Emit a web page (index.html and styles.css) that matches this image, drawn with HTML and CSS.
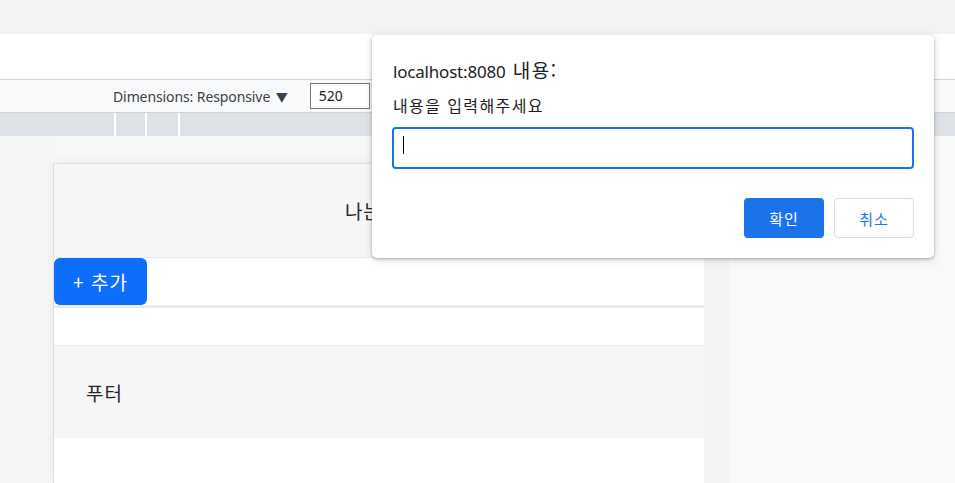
FILE: index.html
```html
<!DOCTYPE html>
<html lang="ko">
<head>
<meta charset="utf-8">
<title>Dialog</title>
<link rel="stylesheet" href="styles.css">
</head>
<body>
<div class="topbar"></div>
<div class="urlbar"></div>
<div class="toolbar">
  <span class="dims">Dimensions: Responsive <span class="caret">▼</span></span>
  <span class="size-input">520</span>
</div>
<div class="ruler">
  <span class="tick t1"></span>
  <span class="tick t2"></span>
  <span class="tick t3"></span>
</div>
<div class="canvas">
  <div class="gutter"></div>
  <div class="page">
    <header class="page-header">나는 헤더</header>
    <div class="action-row"><button class="add-btn">+ 추가</button></div>
    <div class="divider"></div>
    <div class="empty-row"></div>
    <footer class="page-footer">푸터</footer>
    <div class="page-rest"></div>
  </div>
  <div class="scrollbar"></div>
  <div class="outside"></div>
</div>

<div class="dialog">
  <div class="dlg-title">localhost:8080 <span class="ko">내용:</span></div>
  <div class="dlg-msg">내용을 입력해주세요</div>
  <div class="dlg-input"><span class="cursor"></span></div>
  <div class="dlg-buttons">
    <button class="btn-ok">확인</button>
    <button class="btn-cancel">취소</button>
  </div>
</div>
</body>
</html>
```
FILE: styles.css
```css
* { box-sizing: border-box; }
html, body { margin: 0; height: 100%; overflow: hidden; }
body {
  background: #f1f3f4;
  font-family: "Noto Sans", "Noto Sans CJK KR", sans-serif;
  color: #202124;
  position: relative;
}
.topbar { height: 34px; background: #f1f3f4; }
.urlbar { height: 46px; background: #fff; border-bottom: 1px solid #cfd2d6; }
.toolbar {
  height: 33px;
  background: #f8f9fa;
  border-bottom: 1px solid #cfd2d6;
  display: flex;
  align-items: center;
  padding-left: 113px;
  font-size: 14px;
  color: #3c4043;
}
.dims { letter-spacing: -0.1px; }
.caret { font-size: 12px; margin-left: 2px; }
.size-input {
  margin-left: 22px;
  width: 60px;
  height: 26px;
  border: 1px solid #767676;
  background: #fff;
  font-size: 14px;
  padding-left: 8px;
  line-height: 24px;
  color: #202124;
}
.ruler { height: 23px; background: #dee1e6; position: relative; }
.tick { position: absolute; top: 0; width: 2px; height: 100%; background: #fff; }
.t1 { left: 114px; }
.t2 { left: 145px; }
.t3 { left: 178px; }
.canvas {
  display: grid;
  grid-template-columns: 53px 651px 25px 1fr;
  height: 347px;
  background: #f6f7f7;
}
.gutter { background: #f5f6f6; }
.page {
  margin-top: 27px;
  background: #fff;
  border-left: 1px solid #dedede;
  border-top: 1px solid #dedede;
  box-shadow: 0 0 12px rgba(0,0,0,0.05);
  display: flex;
  flex-direction: column;
  font-family: "Noto Sans CJK KR", sans-serif;
}
.page-header {
  height: 94px;
  flex: none;
  background: #f6f6f6;
  border-bottom: 1px solid #eaeaea;
  display: flex;
  align-items: center;
  justify-content: center;
  font-size: 19px;
  letter-spacing: 1px;
  color: #212529;
  padding-left: 12px;
}
.action-row { height: 47px; flex: none; background: #fff; }
.add-btn {
  width: 93px;
  height: 47px;
  background: #0d6efd;
  color: #fff;
  border: 0;
  border-radius: 6px;
  font-family: "Noto Sans CJK KR", sans-serif;
  font-size: 19px;
  letter-spacing: 1px;
  padding: 0;
}
.divider { height: 3px; flex: none; background: #ebebeb; }
.empty-row { height: 38px; flex: none; background: #fff; border-bottom: 1px solid #ebebeb; }
.page-footer {
  height: 92px;
  flex: none;
  background: #f6f6f6;
  display: flex;
  align-items: center;
  padding-left: 32px;
  font-size: 19px;
  letter-spacing: 1px;
  color: #212529;
}
.page-rest { flex: 1; background: #fff; }
.scrollbar { background: #f1f3f4; }
.outside { background: #f8f9f9; }

.dialog {
  position: absolute;
  left: 372px;
  top: 35px;
  width: 562px;
  height: 223px;
  background: #fff;
  border-radius: 5px;
  box-shadow: 0 1px 3px rgba(60,64,67,0.35), 0 2px 8px rgba(60,64,67,0.18);
  padding: 23px 20px 0 21px;
  font-family: "Noto Sans", "Noto Sans CJK KR", sans-serif;
}
.dlg-title { font-size: 17px; line-height: 24px; color: #202124; height: 24px; letter-spacing: -0.2px; }
.dlg-title .ko { font-family: "Noto Sans CJK KR", sans-serif; letter-spacing: 1.5px; font-size: 19px; margin-left: 3px; }
.dlg-msg { margin-top: 12px; font-size: 16px; line-height: 22px; letter-spacing: 1.4px; color: #202124; font-family: "Noto Sans CJK KR", sans-serif; }
.dlg-input {
  margin-top: 11px;
  margin-left: -1px;
  height: 42px;
  border: 2px solid #1a73e8;
  border-radius: 4px;
  position: relative;
}
.cursor { position: absolute; left: 9px; top: 7px; width: 1px; height: 18px; background: #000; }
.dlg-buttons {
  margin-top: 29px;
  display: flex;
  justify-content: flex-end;
  gap: 10px;
}
.dlg-buttons button {
  width: 80px;
  height: 40px;
  border-radius: 4px;
  font-family: "Noto Sans CJK KR", sans-serif;
  font-size: 15px;
  letter-spacing: 1px;
  padding: 0;
}
.btn-ok { background: #1a73e8; color: #fff; border: 0; }
.btn-cancel { background: #fff; color: #1a73e8; border: 1px solid #dadce0; }
```
